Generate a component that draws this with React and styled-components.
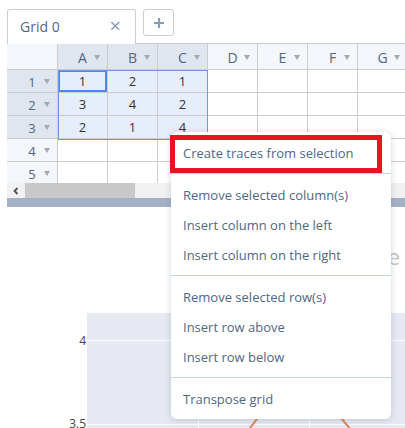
import React from 'react';
import styled, { createGlobalStyle } from 'styled-components';

const GlobalStyle = createGlobalStyle`
  html, body {
    margin: 0;
    padding: 0;
    background: #ffffff;
    overflow: hidden;
  }
  body {
    font-family: 'Open Sans', 'DejaVu Sans', sans-serif;
  }
`;

const Page = styled.div`
  position: relative;
  width: 405px;
  height: 428px;
  overflow: hidden;
  background: #ffffff;
`;

const Workspace = styled.div`
  margin-left: 7px;
  width: 398px;
  overflow: hidden;
`;

const TabBar = styled.div`
  display: flex;
  align-items: flex-start;
  gap: 7px;
  height: 34px;
  padding-top: 9px;
  border-bottom: 1px solid #c8cdd5;
`;

const Tab = styled.div`
  display: flex;
  align-items: center;
  justify-content: space-between;
  box-sizing: border-box;
  width: 129px;
  height: 35px;
  margin-bottom: -1px;
  padding: 0 14px 2px 12px;
  background: #ffffff;
  border: 1px solid #c8cdd5;
  border-bottom: none;
  border-radius: 3px 3px 0 0;
  color: #506784;
  font-size: 14px;
`;

const CloseIcon = styled.span`
  color: #8c9bb0;
  font-size: 20px;
  line-height: 1;
`;

const AddButton = styled.div`
  display: flex;
  align-items: center;
  justify-content: center;
  box-sizing: border-box;
  width: 31px;
  height: 27px;
  border: 1px solid #c8cdd5;
  border-radius: 3px;
`;

const GridWrap = styled.div`
  position: relative;
  height: 139px;
  overflow: hidden;
`;

const Sheet = styled.div`
  display: grid;
  grid-template-columns: 51px repeat(7, 50px);
  grid-template-rows: 26px repeat(5, 23px);
  width: 401px;
`;

const HeaderCell = styled.div`
  display: grid;
  grid-template-columns: 1fr auto 1fr;
  align-items: center;
  box-sizing: border-box;
  border-right: 1px solid #cccccc;
  border-bottom: 1px solid #cccccc;
  background: ${(p) => (p.$selected ? '#dfe6f0' : '#f3f6fa')};
  color: #506784;
  font-size: ${(p) => (p.$row ? '13px' : '14px')};
  padding-top: 1px;
`;

const HeaderLabel = styled.span`
  grid-column: 2;
`;

const Caret = styled.span`
  grid-column: 3;
  justify-self: end;
  margin-right: 7px;
  width: 0;
  height: 0;
  border-left: 3px solid transparent;
  border-right: 3px solid transparent;
  border-top: 5px solid #a8a8a8;
`;

const Corner = styled.div`
  box-sizing: border-box;
  border-right: 1px solid #cccccc;
  border-bottom: 1px solid #cccccc;
  background: #f3f6fa;
`;

const Cell = styled.div`
  display: flex;
  align-items: center;
  justify-content: center;
  box-sizing: border-box;
  border-right: 1px solid #cccccc;
  border-bottom: 1px solid #cccccc;
  background: ${(p) => (p.$selected ? '#e6eefb' : '#ffffff')};
  box-shadow: ${(p) => (p.$active ? 'inset 0 0 0 2px #4b87ef' : 'none')};
  color: #333333;
  font-size: 13px;
`;

const SelectionBox = styled.div`
  position: absolute;
  left: 51px;
  top: 26px;
  width: 150px;
  height: 70px;
  box-sizing: border-box;
  border: 1px solid #6a98ee;
  pointer-events: none;
`;

const ScrollTrack = styled.div`
  display: flex;
  align-items: stretch;
  height: 15px;
  background: #f1f1f1;
`;

const ScrollArrow = styled.div`
  display: flex;
  align-items: center;
  justify-content: center;
  width: 18px;
`;

const ScrollThumb = styled.div`
  width: 110px;
  background: #c8c8c8;
`;

const ResizeBar = styled.div`
  height: 9px;
  background: #a3b1c7;
`;

const Chart = styled.svg`
  display: block;
  font-family: 'Open Sans', 'DejaVu Sans', sans-serif;
`;

const Menu = styled.div`
  position: absolute;
  left: 171px;
  top: 132px;
  width: 220px;
  box-sizing: border-box;
  padding: 6px 0 5px;
  background: #ffffff;
  border-radius: 6px;
  box-shadow: 0 1px 7px rgba(60, 80, 110, 0.22);
`;

const MenuItem = styled.div`
  position: relative;
  height: 30px;
  line-height: 30px;
  padding-left: 12px;
  color: #506784;
  font-size: 13px;
  white-space: nowrap;

  ${(p) =>
    p.$highlighted &&
    `
    &::after {
      content: '';
      position: absolute;
      left: -1px;
      right: 9px;
      top: -3px;
      bottom: -5px;
      border: 5px solid #e8141f;
    }
  `}
`;

const Separator = styled.div`
  height: 1px;
  margin: 5px 0 6px;
  background: #c8d4e3;
`;

const columns = ['A', 'B', 'C', 'D', 'E', 'F', 'G'];
const data = [
  [1, 2, 1],
  [3, 4, 2],
  [2, 1, 4],
  [],
  [],
];

const menuGroups = [
  ['Create traces from selection'],
  ['Remove selected column(s)', 'Insert column on the left', 'Insert column on the right'],
  ['Remove selected row(s)', 'Insert row above', 'Insert row below'],
  ['Transpose grid'],
];

function App() {
  return (
    <Page>
      <GlobalStyle />
      <Workspace>
        <TabBar>
          <Tab>
            <span>Grid 0</span>
            <CloseIcon>×</CloseIcon>
          </Tab>
          <AddButton>
            <svg width="12" height="12" viewBox="0 0 12 12">
              <path d="M6 1v10M1 6h10" stroke="#8c9bb0" strokeWidth="2.2" />
            </svg>
          </AddButton>
        </TabBar>

        <GridWrap>
          <Sheet>
            <Corner />
            {columns.map((c, i) => (
              <HeaderCell key={c} $selected={i < 3}>
                <HeaderLabel>{c}</HeaderLabel>
                <Caret />
              </HeaderCell>
            ))}
            {data.map((row, r) => (
              <React.Fragment key={r}>
                <HeaderCell $row $selected={r < 3}>
                  <HeaderLabel>{r + 1}</HeaderLabel>
                  <Caret />
                </HeaderCell>
                {columns.map((c, i) => (
                  <Cell key={c} $selected={r < 3 && i < 3} $active={r === 0 && i === 0}>
                    {row[i]}
                  </Cell>
                ))}
              </React.Fragment>
            ))}
          </Sheet>
          <SelectionBox />
        </GridWrap>

        <ScrollTrack>
          <ScrollArrow>
            <svg width="8" height="8" viewBox="0 0 8 8">
              <path d="M5.5 1 L2.5 4 L5.5 7" fill="none" stroke="#505050" strokeWidth="1.8" />
            </svg>
          </ScrollArrow>
          <ScrollThumb />
        </ScrollTrack>
        <ResizeBar />
      </Workspace>

      <Chart width="405" height="221" viewBox="0 0 405 221">
        <text x="400" y="58" textAnchor="end" fontSize="22" fill="#c4c4c4">
          Click to enter Plot title
        </text>
        <rect x="87" y="106" width="318" height="115" fill="#e6e8f2" />
        <line x1="87" y1="133.5" x2="405" y2="133.5" stroke="#ffffff" />
        <line x1="87" y1="217.5" x2="405" y2="217.5" stroke="#ffffff" />
        <line x1="198.5" y1="106" x2="198.5" y2="221" stroke="#ffffff" />
        <line x1="309.5" y1="106" x2="309.5" y2="221" stroke="#ffffff" />
        <polyline
          points="240,234 298,159 356,229"
          fill="none"
          stroke="#e08450"
          strokeWidth="2"
        />
        <text x="86" y="138" textAnchor="end" fontSize="12" fill="#444444">4</text>
        <text x="86" y="221" textAnchor="end" fontSize="12" fill="#444444">3.5</text>
      </Chart>

      <Menu>
        {menuGroups.map((group, g) => (
          <React.Fragment key={g}>
            {g > 0 && <Separator />}
            {group.map((label) => (
              <MenuItem key={label} $highlighted={label === 'Create traces from selection'}>
                {label}
              </MenuItem>
            ))}
          </React.Fragment>
        ))}
      </Menu>
    </Page>
  );
}

export default App;
